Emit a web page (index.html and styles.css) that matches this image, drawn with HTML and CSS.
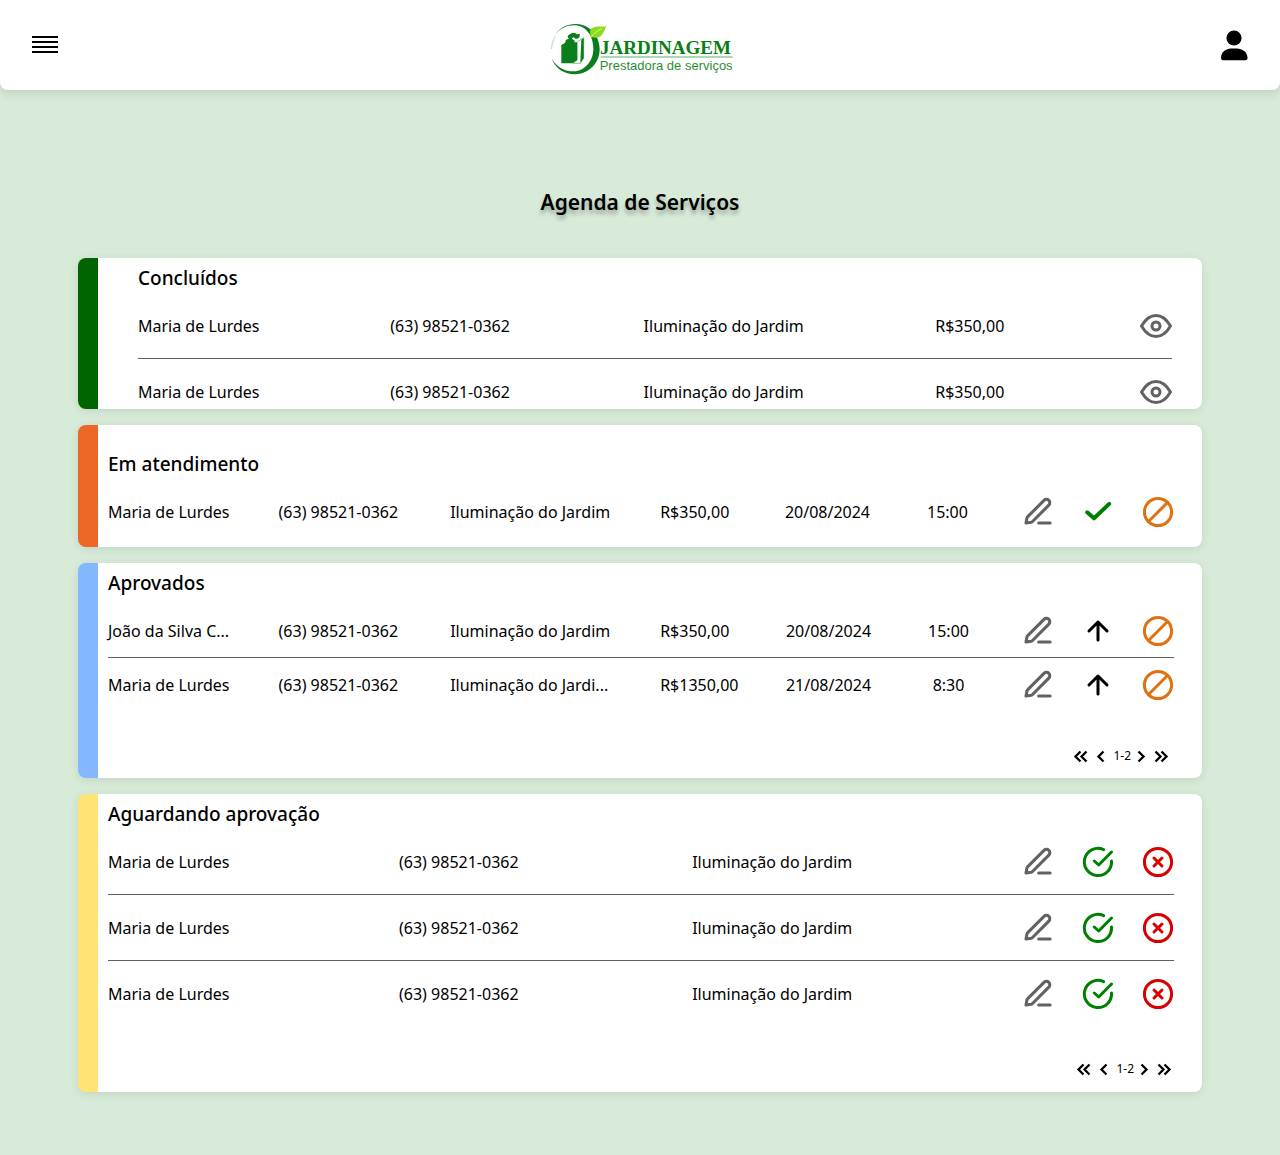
FILE: index.html
```html
<!DOCTYPE html>
<html lang="pt-BR">
<head>
<meta charset="utf-8">
<meta name="viewport" content="width=device-width, initial-scale=1">
<title>Agenda de Serviços</title>
<link rel="stylesheet" href="styles.css">
</head>
<body>
<svg class="sprite" aria-hidden="true">
  <symbol id="eye" viewBox="0 0 32 32"><path d="M1.5 16C5 10 9.500 5.500 16 5.500S27 10 30.500 16C27 22 22.500 26.500 16 26.500S5 22 1.500 16Z"/><circle cx="16" cy="16" r="4"/></symbol>
  <symbol id="pen" viewBox="0 0 24 24"><path d="M4.300 15.500 16.500 3.300a2.500 2.500 0 0 1 3.600 3.600L7.900 19.100a2 2 0 0 1-1 .6L3 20.300l.7-3.800a2 2 0 0 1 .6-1ZM12.500 20.300h8.600"/></symbol>
  <symbol id="check" viewBox="0 0 32 32"><path d="m5.200 16.300 6.800 6L27.200 7.900"/></symbol>
  <symbol id="ban" viewBox="0 0 32 32"><circle cx="16" cy="16" r="13.600"/><path d="m25.500 6.500-19 19"/></symbol>
  <symbol id="up" viewBox="0 0 32 32"><path d="M16 25V7.500M7 16l9-9 9 9"/></symbol>
  <symbol id="approve" viewBox="0 0 32 32"><path d="M29.500 15A13.600 13.600 0 1 1 21.600 3.600M12.300 15l4.400 4L29.500 6"/></symbol>
  <symbol id="reject" viewBox="0 0 32 32"><circle cx="16" cy="16" r="13.600"/><path d="m12 12 8 8M20 12l-8 8"/></symbol>
  <symbol id="first" viewBox="0 0 20 20"><path d="m9.500 5.500-5 5 5 5M15.500 5.500l-5 5 5 5"/></symbol>
  <symbol id="prev" viewBox="0 0 20 20"><path d="m12.500 5.500-5 5 5 5"/></symbol>
  <symbol id="next" viewBox="0 0 20 20"><path d="m7.500 5.500 5 5-5 5"/></symbol>
  <symbol id="last" viewBox="0 0 20 20"><path d="m4.500 5.500 5 5-5 5M10.500 5.500l5 5-5 5"/></symbol>
</svg>

<header class="topbar">
  <button class="icon-button" type="button" aria-label="Menu">
    <svg class="menu-icon" viewBox="0 0 26 18"><path d="M0 0h26v2H0zM0 5h26v2H0zM0 10h26v2H0zM0 15h26v2H0z"/></svg>
  </button>
  <a class="brand" href="#" aria-label="FJ Jardinagem">
    <svg class="logo" viewBox="15 0 570 180">
      <path class="logo-green" fill-rule="evenodd" d="M44 62C60 36 84 26 110 27c42 3 69 36 69 76 0 42-33 75-75 75-30 0-56-16-69-46 18 27 42 38 67 37 32-2 58-30 58-68 0-40-24-70-57-70-23 0-43 9-59 31Z"/>
      <path class="logo-ring" d="M46 64c-8 12-11 24-11 38"/>
      <path class="logo-leaf" d="M153 67c-6-19-3-31 16-32 12-1 20 1 30-2-6 12-10 33-28 35-7 1-12-2-18-1Z"/>
      <path class="logo-vein" d="M153 67c10-13 20-20 32-26"/>
      <path class="logo-green" d="M64 90 78 82h33v55l-13 8H64ZM76 84c-1-8 3-12 11-13-6-4-4-10 2-13 8-6 17-5 22 0l8-2c2 9-3 15-12 15l-8-5-3 5 8 6-1 7Z"/>
      <path class="logo-box" d="m113 80 18-12v62l-10 15h-22l14-11Z"/>
      <path class="logo-green" d="m124 74 7-5v60l-10 15Z"/>
      <text class="logo-name" x="180" y="118">JARDINAGEM</text>
      <path class="logo-line" d="M182 126h396"/>
      <text class="logo-tagline" x="179" y="165">Prestadora de serviços</text>
    </svg>
  </a>
  <button class="icon-button" type="button" aria-label="Perfil">
    <svg class="user-icon" viewBox="0 -1 28 32"><circle cx="14" cy="8" r="7.600"/><path d="M1 28C1 22 6 18.500 11 18.500h6c5 0 10.500 3.500 10.500 9.500 0 1.300-.8 2.200-2 2.200H3C1.800 30.200 1 29.300 1 28Z"/></svg>
  </button>
</header>

<main class="page">
  <h1 class="page-title">Agenda de Serviços</h1>

  <section class="card card-done">
    <h2 class="card-title">Concluídos</h2>
    <table class="services">
      <colgroup><col class="done-name"><col class="done-phone"><col class="done-service"><col><col class="one-action"></colgroup>
      <tr><td>Maria de Lurdes</td><td>(63) 98521-0362</td><td>Iluminação do Jardim</td><td>R$350,00</td><td><div class="actions"><button class="action gray" type="button" aria-label="Ver"><svg><use href="#eye"/></svg></button></div></td></tr>
      <tr><td>Maria de Lurdes</td><td>(63) 98521-0362</td><td>Iluminação do Jardim</td><td>R$350,00</td><td><div class="actions"><button class="action gray" type="button" aria-label="Ver"><svg><use href="#eye"/></svg></button></div></td></tr>
    </table>
  </section>

  <section class="card card-progress">
    <h2 class="card-title">Em atendimento</h2>
    <table class="services">
      <colgroup><col class="name"><col class="phone"><col class="service"><col class="price"><col class="date"><col class="time"><col></colgroup>
      <tr><td>Maria de Lurdes</td><td>(63) 98521-0362</td><td>Iluminação do Jardim</td><td>R$350,00</td><td>20/08/2024</td><td class="centered">15:00</td><td><div class="actions"><button class="action gray" type="button" aria-label="Editar"><svg class="pen"><use href="#pen"/></svg></button><button class="action green" type="button" aria-label="Concluir"><svg class="bold"><use href="#check"/></svg></button><button class="action orange" type="button" aria-label="Cancelar"><svg><use href="#ban"/></svg></button></div></td></tr>
    </table>
  </section>

  <section class="card card-approved">
    <h2 class="card-title">Aprovados</h2>
    <table class="services compact">
      <colgroup><col class="name"><col class="phone"><col class="service"><col class="price-wide"><col class="date"><col class="time"><col></colgroup>
      <tr><td>João da Silva C...</td><td>(63) 98521-0362</td><td>Iluminação do Jardim</td><td>R$350,00</td><td>20/08/2024</td><td class="centered">15:00</td><td><div class="actions"><button class="action gray" type="button" aria-label="Editar"><svg class="pen"><use href="#pen"/></svg></button><button class="action black" type="button" aria-label="Iniciar"><svg><use href="#up"/></svg></button><button class="action orange" type="button" aria-label="Cancelar"><svg><use href="#ban"/></svg></button></div></td></tr>
      <tr><td>Maria de Lurdes</td><td>(63) 98521-0362</td><td>Iluminação do Jardi...</td><td>R$1350,00</td><td>21/08/2024</td><td class="centered">8:30</td><td><div class="actions"><button class="action gray" type="button" aria-label="Editar"><svg class="pen"><use href="#pen"/></svg></button><button class="action black" type="button" aria-label="Iniciar"><svg><use href="#up"/></svg></button><button class="action orange" type="button" aria-label="Cancelar"><svg><use href="#ban"/></svg></button></div></td></tr>
    </table>
    <nav class="pager" aria-label="Páginas de aprovados">
      <button type="button" aria-label="Primeira"><svg><use href="#first"/></svg></button><button type="button" aria-label="Anterior"><svg><use href="#prev"/></svg></button><span>1-2</span><button type="button" aria-label="Próxima"><svg><use href="#next"/></svg></button><button type="button" aria-label="Última"><svg><use href="#last"/></svg></button>
    </nav>
  </section>

  <section class="card card-waiting">
    <h2 class="card-title">Aguardando aprovação</h2>
    <table class="services">
      <colgroup><col class="wait-name"><col class="wait-phone"><col><col class="three-actions"></colgroup>
      <tr><td>Maria de Lurdes</td><td>(63) 98521-0362</td><td>Iluminação do Jardim</td><td><div class="actions"><button class="action gray" type="button" aria-label="Editar"><svg class="pen"><use href="#pen"/></svg></button><button class="action green" type="button" aria-label="Aprovar"><svg><use href="#approve"/></svg></button><button class="action red" type="button" aria-label="Recusar"><svg><use href="#reject"/></svg></button></div></td></tr>
      <tr><td>Maria de Lurdes</td><td>(63) 98521-0362</td><td>Iluminação do Jardim</td><td><div class="actions"><button class="action gray" type="button" aria-label="Editar"><svg class="pen"><use href="#pen"/></svg></button><button class="action green" type="button" aria-label="Aprovar"><svg><use href="#approve"/></svg></button><button class="action red" type="button" aria-label="Recusar"><svg><use href="#reject"/></svg></button></div></td></tr>
      <tr><td>Maria de Lurdes</td><td>(63) 98521-0362</td><td>Iluminação do Jardim</td><td><div class="actions"><button class="action gray" type="button" aria-label="Editar"><svg class="pen"><use href="#pen"/></svg></button><button class="action green" type="button" aria-label="Aprovar"><svg><use href="#approve"/></svg></button><button class="action red" type="button" aria-label="Recusar"><svg><use href="#reject"/></svg></button></div></td></tr>
    </table>
    <nav class="pager" aria-label="Páginas de aguardando aprovação">
      <button type="button" aria-label="Primeira"><svg><use href="#first"/></svg></button><button type="button" aria-label="Anterior"><svg><use href="#prev"/></svg></button><span>1-2</span><button type="button" aria-label="Próxima"><svg><use href="#next"/></svg></button><button type="button" aria-label="Última"><svg><use href="#last"/></svg></button>
    </nav>
  </section>
</main>
</body>
</html>
```
FILE: styles.css
```css
* { box-sizing: border-box; }

body {
  margin: 0;
  background: #d8ebd9;
  color: #000;
  font-family: "Noto Sans", "Open Sans", sans-serif;
  font-size: 16px;
  line-height: 24px;
}

button {
  display: block;
  padding: 0;
  border: 0;
  background: none;
  cursor: pointer;
}

svg { display: block; }
.sprite { display: none; }

/* Top bar */
.topbar {
  display: grid;
  grid-template-columns: 1fr auto 1fr;
  align-items: center;
  height: 90px;
  padding: 0 32px;
  background: #fff;
  border-radius: 0 0 8px 8px;
  box-shadow: 0 4px 10px rgba(0, 0, 0, 0.1);
}
.icon-button:last-child { justify-self: end; }
.icon-button:first-child { justify-self: start; }
.menu-icon { width: 26px; height: 18px; }
.user-icon { width: 28px; height: 32px; }
.logo { width: 190px; height: 60px; }
.logo-green { fill: #0a7d1c; }
.logo-ring { fill: none; stroke: #8cc496; stroke-width: 2; }
.logo-leaf { fill: #8fdc1e; }
.logo-vein { fill: none; stroke: #d5f59a; stroke-width: 3; }
.logo-box { fill: #fff; stroke: #4f9f5c; stroke-width: 2; }
.logo-line { stroke: #5fae66; stroke-width: 3; }
.logo-name {
  fill: #088012;
  font: bold 57px "Liberation Serif", serif;
}
.logo-tagline {
  fill: #2a8f32;
  font: 39px "Liberation Sans", sans-serif;
}

/* Page */
.page {
  display: flex;
  flex-direction: column;
  gap: 16px;
  padding: 96px 78px 63px;
}
.page-title {
  margin: 0 0 24px;
  font-size: 21px;
  font-weight: 600;
  line-height: 32px;
  text-align: center;
  text-shadow: 0 4px 4px rgba(0, 0, 0, 0.3);
}

/* Cards */
.card {
  padding: 5px 28px 0 10px;
  border-left: 20px solid;
  border-radius: 8px;
  background: #fff;
  box-shadow: 0 2px 10px rgba(0, 0, 0, 0.1);
}
.card-done { padding: 5px 30px 0 40px; border-color: #006400; }
.card-progress { padding-top: 24px; padding-bottom: 2px; border-color: #ec6726; }
.card-approved { border-color: #83b7ff; }
.card-waiting { border-color: #ffe375; }
.card-title {
  margin: 0;
  font-size: 19px;
  font-weight: 500;
  line-height: 30px;
}
.card-approved .card-title { margin-bottom: 6px; }

/* Service tables */
.services {
  width: 100%;
  table-layout: fixed;
  border-collapse: separate;
  border-spacing: 0;
}
.services td {
  height: 66px;
  padding: 0;
  border-bottom: 1px solid #606060;
  white-space: nowrap;
}
.services tr:last-child td { border-bottom-color: transparent; }
.services.compact td { height: 54px; }
.card-done tr:last-child td {
  height: 50px;
  padding-top: 16px;
  padding-bottom: 1px;
  border-bottom: 0;
}
.services .centered { text-align: center; }
.done-name { width: 24.4%; }
.done-phone { width: 24.5%; }
.done-service { width: 28.2%; }
.one-action { width: 32px; }
.name { width: 16%; }
.phone { width: 16.1%; }
.service { width: 19.7%; }
.price { width: 11.7%; }
.price-wide { width: 11.8%; }
.date { width: 13%; }
.time { width: 4.5%; }
.wait-name { width: 27.3%; }
.wait-phone { width: 27.5%; }
.three-actions { width: 152px; }

.actions {
  display: flex;
  justify-content: flex-end;
  gap: 28px;
}
.action svg {
  width: 32px;
  height: 32px;
  fill: none;
  stroke: currentColor;
  stroke-width: 3;
  stroke-linecap: round;
  stroke-linejoin: round;
}
.action .pen { stroke-width: 2.3; }
.action .bold { stroke-width: 4; }
.gray { color: #626262; }
.green { color: #008000; }
.orange { color: #e07010; }
.black { color: #000; }
.red { color: #d90000; }

/* Pagination */
.pager {
  display: flex;
  justify-content: flex-end;
  align-items: center;
  padding: 34px 3px 12px 0;
  font-size: 12px;
  line-height: 20px;
}
.card-waiting .pager { padding: 32px 0 13px; }
.pager span { width: 20px; text-align: right; }
.pager svg {
  width: 20px;
  height: 20px;
  fill: none;
  stroke: #000;
  stroke-width: 2.3;
}
```
